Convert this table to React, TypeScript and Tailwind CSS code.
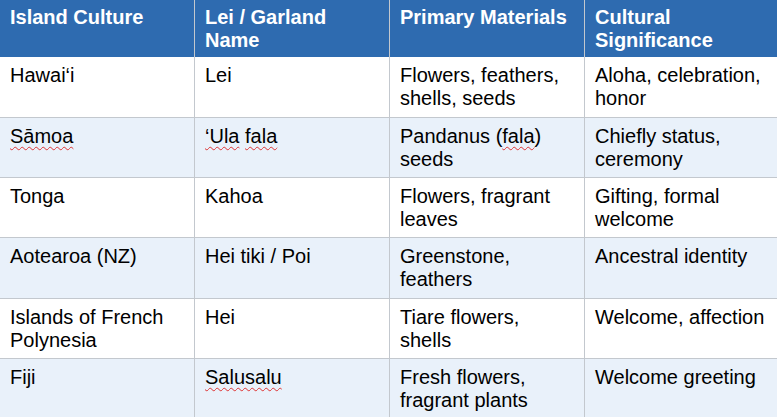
const headers = [
  "Island Culture",
  "Lei / Garland Name",
  "Primary Materials",
  "Cultural Significance",
];

// spelling marks show up under a few of the Polynesian words
const Sq = ({ children }: { children: string }) => (
  <span className="underline decoration-wavy decoration-[#d33] decoration-1 underline-offset-[3px]">
    {children}
  </span>
);

const rows: React.ReactNode[][] = [
  ["Hawai‘i", "Lei", "Flowers, feathers, shells, seeds", "Aloha, celebration, honor"],
  [
    <Sq>Sāmoa</Sq>,
    <>
      <Sq>‘Ula</Sq> <Sq>fala</Sq>
    </>,
    <>
      Pandanus (<Sq>fala</Sq>) seeds
    </>,
    "Chiefly status, ceremony",
  ],
  ["Tonga", "Kahoa", "Flowers, fragrant leaves", "Gifting, formal welcome"],
  ["Aotearoa (NZ)", "Hei tiki / Poi", "Greenstone, feathers", "Ancestral identity"],
  ["Islands of French Polynesia", "Hei", "Tiare flowers, shells", "Welcome, affection"],
  ["Fiji", <Sq>Salusalu</Sq>, "Fresh flowers, fragrant plants", "Welcome greeting"],
];

const App = () => {
  return (
    <div className="w-[777px] h-[417px] overflow-hidden bg-white font-['Liberation_Sans',Arial,sans-serif] text-[20px] leading-[23px] text-black">
      <div className="w-[779px]">
        <div className="grid grid-cols-[194px_195px_195px_195px] h-[57px] bg-[#2e6bb0] text-white font-bold">
          {headers.map((h, i) => (
            <div
              key={h}
              className={`pl-[10px] pr-[10px] pt-[6px] ${i > 0 ? "border-l border-[#c3c8ce]" : ""}`}
            >
              {h}
            </div>
          ))}
        </div>

        {rows.map((row, r) => (
          <div
            key={r}
            className={`grid grid-cols-[194px_195px_195px_195px] ${r === 3 ? "h-[61px]" : "h-[60px]"} ${
              r > 0 ? "border-t border-[#c3c8ce]" : ""
            } ${r % 2 === 1 ? "bg-[#e9f1fa]" : "bg-white"}`}
          >
            {row.map((cell, c) => (
              <div
                key={c}
                className={`pl-[10px] pr-[10px] pt-[7px] ${c > 0 ? "border-l border-[#c3c8ce]" : ""}`}
              >
                {cell}
              </div>
            ))}
          </div>
        ))}
      </div>
    </div>
  );
};

export default App;
